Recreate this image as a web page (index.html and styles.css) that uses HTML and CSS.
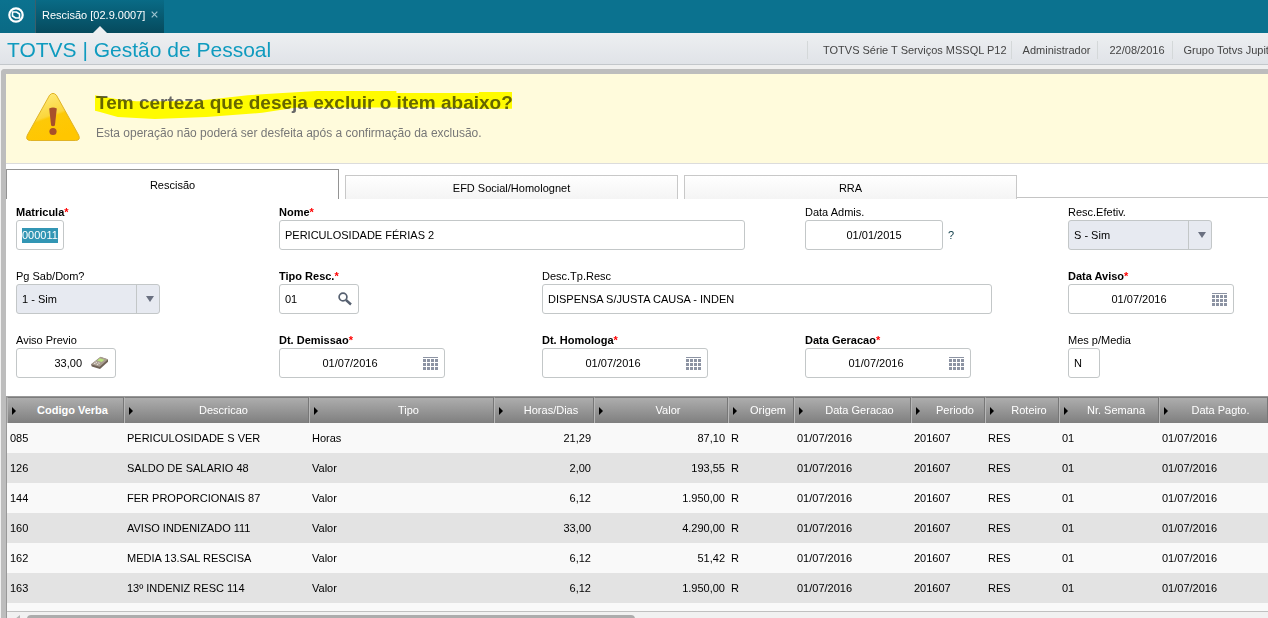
FILE: index.html
```html
<!DOCTYPE html>
<html lang="pt-BR">
<head>
<meta charset="utf-8">
<title>Rescisão [02.9.0007]</title>
<link rel="stylesheet" href="styles.css">
</head>
<body>
<svg class="sprite" aria-hidden="true">
  <symbol id="calendar" viewBox="0 0 15 13">
    <path fill="#8c93a3" d="M0 0h15v1H0zM0 2h3v3H0zM4 2h3v3H4zM8 2h3v3H8zM12 2h3v3h-3zM0 6h3v3H0zM4 6h3v3H4zM8 6h3v3H8zM12 6h3v3h-3zM0 10h3v3H0zM4 10h3v3H4zM8 10h3v3H8zM12 10h3v3h-3z"/>
  </symbol>
  <symbol id="down" viewBox="0 0 8 6"><path fill="#6a7080" d="M0 0h8L4 6z"/></symbol>
</svg>

<nav class="topbar">
  <button class="home" type="button" aria-label="Início">
    <svg width="16" height="16" viewBox="0 0 16 16">
      <circle cx="8" cy="8" r="6.7" fill="none" stroke="#fff" stroke-width="2.2"/>
      <path d="M4.500 5h4l3 2v4h-4l-3-2z" fill="none" stroke="#fff" stroke-width="1.600"/>
      <path d="M6 6.500l4 2.500" stroke="#0b6a85" stroke-width="1.500"/>
    </svg>
  </button>
  <div class="apptab">
    <span>Rescisão [02.9.0007]</span>
    <button class="close" type="button" aria-label="Fechar">
      <svg width="7" height="7" viewBox="0 0 7 7"><path d="M.7.7l5.6 5.6M6.3.7L.7 6.3" stroke="#9cc3cf" stroke-width="1.2"/></svg>
    </button>
  </div>
</nav>

<header class="header">
  <h1>TOTVS | Gestão de Pessoal</h1>
  <ul class="meta">
    <li>TOTVS Série T Serviços MSSQL P12</li>
    <li>Administrador</li>
    <li>22/08/2016</li>
    <li>Grupo Totvs Jupiter</li>
  </ul>
</header>

<main class="frame">
  <section class="banner">
    <svg class="warn" width="54" height="48" viewBox="0 0 54 48">
      <defs><linearGradient id="wg" x1="0" y1="0" x2="0.4" y2="1"><stop offset="0" stop-color="#fff08a"/><stop offset=".55" stop-color="#fbd63c"/><stop offset=".6" stop-color="#fdc907"/><stop offset="1" stop-color="#ffc600"/></linearGradient></defs>
      <path d="M23.6 2.2Q27-1.4 30.4 2.2L52.6 42Q55 47.4 49.5 47.5H4.500Q-1 47.400 1.400 42Z" fill="url(#wg)" stroke="#e0b325"/>
      <path d="M23.200 15.500q3.800-2 7.600 0L28.900 32.500q-1.900 1.500-3.800 0Z" fill="#a8502a"/>
      <circle cx="27" cy="38.500" r="3.600" fill="#a8502a"/>
    </svg>
    <div class="message">
      <h2>Tem certeza que deseja excluir o item abaixo?
        <svg class="marker" width="417" height="28" viewBox="0 0 404 27" preserveAspectRatio="none" aria-hidden="true">
          <path fill="#ff0" d="M0 4L22 8 40 10H95L122 7 148 4 182 2 215 0H292V2H372V1H404V17H376L340 16H195L162 21 108 25 58 27 22 25 4 20 0 19Z"/>
        </svg>
      </h2>
      <p>Esta operação não poderá ser desfeita após a confirmação da exclusão.</p>
    </div>
  </section>

  <div class="tabs" role="tablist">
    <button class="tab active" type="button" role="tab" aria-selected="true">Rescisão</button>
    <button class="tab" type="button" role="tab">EFD Social/Homolognet</button>
    <button class="tab" type="button" role="tab">RRA</button>
    <span class="tabline"></span>
  </div>

  <form class="form">
    <div class="field">
      <label class="req" for="matricula">Matricula</label>
      <div class="box w48"><input id="matricula" value="000011" autofocus></div>
    </div>
    <div class="field span2">
      <label class="req" for="nome">Nome</label>
      <div class="box w466"><input id="nome" value="PERICULOSIDADE FÉRIAS 2"></div>
    </div>
    <div class="field">
      <label for="admis">Data Admis.</label>
      <div class="line"><div class="box w138"><input class="center" id="admis" value="01/01/2015"></div><span class="help">?</span></div>
    </div>
    <div class="field">
      <label for="efetiv">Resc.Efetiv.</label>
      <div class="box w144 drop"><select id="efetiv"><option>S - Sim</option></select><span class="arrow"><svg width="8" height="6"><use href="#down"/></svg></span></div>
    </div>

    <div class="field">
      <label for="sabdom">Pg Sab/Dom?</label>
      <div class="box w144 drop"><select id="sabdom"><option>1 - Sim</option></select><span class="arrow"><svg width="8" height="6"><use href="#down"/></svg></span></div>
    </div>
    <div class="field">
      <label class="req" for="tipo">Tipo Resc.</label>
      <div class="box w80"><input id="tipo" value="01">
        <button class="pick" type="button" aria-label="Pesquisar"><svg width="14" height="14" viewBox="0 0 14 14"><circle cx="5" cy="5" r="3.900" fill="none" stroke="#566070" stroke-width="1.700"/><path d="M8 8l5 4.500" stroke="#566070" stroke-width="2.400"/></svg></button>
      </div>
    </div>
    <div class="field span2">
      <label for="desc">Desc.Tp.Resc</label>
      <div class="box w450"><input id="desc" value="DISPENSA S/JUSTA CAUSA - INDEN"></div>
    </div>
    <div class="field">
      <label class="req" for="aviso">Data Aviso</label>
      <div class="box w166"><input class="date" id="aviso" value="01/07/2016"><button class="pick" type="button" aria-label="Calendário"><svg width="15" height="13"><use href="#calendar"/></svg></button></div>
    </div>

    <div class="field">
      <label for="previo">Aviso Previo</label>
      <div class="box w100"><input class="num" id="previo" value="33,00">
        <button class="pick" type="button" aria-label="Calculadora"><svg width="18" height="14" viewBox="0 0 18 14">
          <path d="M0 8.500L9.500 1 17 3.500v2.200L9 13 .8 10.500z" fill="#6f6256"/>
          <path d="M0 8.300L9.500.8 17 3.300 8.600 10.700z" fill="#a99d90"/>
          <path d="M8.800 2.300l4.700 1.400-2.800 2.300-4.700-1.500z" fill="#b9e27c"/>
          <path d="M4.500 6l1.500.5M3 7.200l1.500.5M7.200 6.900l1.500.4M5.700 8.100l1.500.4" stroke="#eee8e0"/>
        </svg></button>
      </div>
    </div>
    <div class="field">
      <label class="req" for="demissao">Dt. Demissao</label>
      <div class="box w166"><input class="date" id="demissao" value="01/07/2016"><button class="pick" type="button" aria-label="Calendário"><svg width="15" height="13"><use href="#calendar"/></svg></button></div>
    </div>
    <div class="field">
      <label class="req" for="homologa">Dt. Homologa</label>
      <div class="box w166"><input class="date" id="homologa" value="01/07/2016"><button class="pick" type="button" aria-label="Calendário"><svg width="15" height="13"><use href="#calendar"/></svg></button></div>
    </div>
    <div class="field">
      <label class="req" for="geracao">Data Geracao</label>
      <div class="box w166"><input class="date" id="geracao" value="01/07/2016"><button class="pick" type="button" aria-label="Calendário"><svg width="15" height="13"><use href="#calendar"/></svg></button></div>
    </div>
    <div class="field">
      <label for="media">Mes p/Media</label>
      <div class="box w32"><input id="media" value="N"></div>
    </div>
  </form>

  <section class="grid">
    <div class="rows">
      <table>
        <colgroup><col class="c117"><col class="c185"><col class="c185"><col class="c100"><col class="c134"><col class="c66"><col class="c117"><col class="c74"><col class="c74"><col class="c100"><col></colgroup>
        <thead><tr><th class="key">Codigo Verba</th><th>Descricao</th><th>Tipo</th><th>Horas/Dias</th><th>Valor</th><th>Origem</th><th>Data Geracao</th><th>Periodo</th><th>Roteiro</th><th>Nr. Semana</th><th>Data Pagto.</th></tr></thead>
        <tbody>
          <tr><td>085</td><td>PERICULOSIDADE S VER</td><td>Horas</td><td class="r">21,29</td><td class="r">87,10</td><td>R</td><td>01/07/2016</td><td>201607</td><td>RES</td><td>01</td><td>01/07/2016</td></tr>
          <tr><td>126</td><td>SALDO DE SALARIO 48</td><td>Valor</td><td class="r">2,00</td><td class="r">193,55</td><td>R</td><td>01/07/2016</td><td>201607</td><td>RES</td><td>01</td><td>01/07/2016</td></tr>
          <tr><td>144</td><td>FER PROPORCIONAIS 87</td><td>Valor</td><td class="r">6,12</td><td class="r">1.950,00</td><td>R</td><td>01/07/2016</td><td>201607</td><td>RES</td><td>01</td><td>01/07/2016</td></tr>
          <tr><td>160</td><td>AVISO INDENIZADO 111</td><td>Valor</td><td class="r">33,00</td><td class="r">4.290,00</td><td>R</td><td>01/07/2016</td><td>201607</td><td>RES</td><td>01</td><td>01/07/2016</td></tr>
          <tr><td>162</td><td>MEDIA 13.SAL RESCISA</td><td>Valor</td><td class="r">6,12</td><td class="r">51,42</td><td>R</td><td>01/07/2016</td><td>201607</td><td>RES</td><td>01</td><td>01/07/2016</td></tr>
          <tr><td>163</td><td>13º INDENIZ RESC 114</td><td>Valor</td><td class="r">6,12</td><td class="r">1.950,00</td><td>R</td><td>01/07/2016</td><td>201607</td><td>RES</td><td>01</td><td>01/07/2016</td></tr>
        </tbody>
      </table>
    </div>
    <div class="scroll"><svg class="left" width="5" height="8" viewBox="0 0 5 8"><path d="M5 0v8L0 4z" fill="#b4b4b4"/></svg><span class="thumb"></span></div>
  </section>
</main>
<script src="main.js"></script>
</body>
</html>
```

FILE: styles.css
```css
* { box-sizing: border-box; }

body {
  margin: 0;
  height: 100vh;
  display: flex;
  flex-direction: column;
  overflow: hidden;
  background: #f0f0f0;
  color: #000;
  font: 11px/14px "Liberation Sans", Arial, sans-serif;
}

button, input, select { font: inherit; color: inherit; margin: 0; }
button { padding: 0; border: 0; background: none; }
h1, h2, p, ul { margin: 0; padding: 0; }
svg { display: block; flex: none; }
.sprite { position: absolute; width: 0; height: 0; }

/* Top bar */
.topbar { flex: none; display: flex; height: 33px; background: #0b728f; }
.home {
  width: 36px;
  padding: 0 0 3px 8px;
  border-right: 1px solid #3c5f6b;
  background: linear-gradient(#0b728f, #0a6a85);
}
.apptab {
  display: flex;
  position: relative;
  align-items: center;
  gap: 6px;
  padding: 0 6px 3px 6px;
  background: linear-gradient(#096b86, #064a5d);
  color: #fff;
}
.close { padding-bottom: 2px; }
.apptab::after {
  content: "";
  position: absolute;
  bottom: 0;
  left: 50%;
  margin-left: -7px;
  border: 7px solid transparent;
  border-top: 0;
  border-bottom-color: #edeff1;
}

/* Header */
.header {
  flex: none;
  display: flex;
  align-items: center;
  height: 32px;
  padding: 2px 0 0 7px;
  border-bottom: 1px solid #c3c7cb;
  background: linear-gradient(#edeff1, #e0e3e8);
}
.header h1 { flex: 1; color: #0f9bbf; font-size: 21px; line-height: 24px; font-weight: 400; white-space: nowrap; }
.meta { flex: none; display: flex; width: 461px; overflow: hidden; list-style: none; color: #444; white-space: nowrap; }
.meta li { flex: none; padding: 2px 7px 2px 11px; border-left: 1px solid #d4d8d9; }
.meta li:first-child { padding: 2px 4px 2px 15px; }

/* Frame */
.frame {
  flex: 1;
  min-height: 0;
  display: flex;
  flex-direction: column;
  margin: 4px 0 0 1px;
  border: solid #bdbdbd;
  border-width: 5px 0 0 5px;
  border-radius: 4px 0 0 0;
  background: #fff;
}
.banner {
  flex: none;
  display: flex;
  gap: 16px;
  padding: 19px 20px 20px;
  border-bottom: 1px solid #dcdcdc;
  background: #fffbdc;
  color: #666;
}
.message { display: flex; flex-direction: column; gap: 10px; }
.message h2 { position: relative; font-size: 19px; line-height: 20px; }
.marker { position: absolute; left: -1px; top: -2px; mix-blend-mode: multiply; }
.message p { font-size: 12px; line-height: 20px; color: #777; }

/* Tabs */
.tabs { flex: none; display: flex; align-items: flex-end; gap: 6px; padding-top: 5px; }
.tab {
  flex: 1 1 0;
  height: 24px;
  border: 1px solid #c8c8c8;
  border-bottom: 0;
  background: linear-gradient(#fff, #f4f4f4);
}
.tab.active { height: 30px; border-color: #949494; background: #fff; }
.tabline { flex: 0 0 251px; height: 2px; margin-left: -6px; border-top: 1px solid #c4c4c4; }

/* Form */
.form {
  flex: none;
  display: grid;
  grid-template-columns: repeat(4, 1fr) 200px;
  row-gap: 19px;
  padding: 6px 0 18px 10px;
}
.span2 { grid-column: span 2; }
.field { display: flex; flex-direction: column; min-width: 0; }
.field label { line-height: 15px; }
.req { font-weight: 700; }
.req::after { content: "*"; color: #f00; }
.line { display: flex; align-items: center; gap: 5px; }
.help { color: #0c3a46; }
.box {
  display: flex;
  align-items: center;
  height: 30px;
  max-width: 100%;
  padding: 0 5px;
  border: 1px solid #c3c7c8;
  border-radius: 3px;
  background: #fff;
}
.box input { flex: 1; min-width: 0; height: 15px; line-height: 15px; padding: 0; border: 0; outline: 0; background: none; }
.box .center { text-align: center; }
.box .date { text-align: center; padding-right: 8px; }
.box .num { text-align: right; padding-right: 9px; }
.box input::selection { background: #3296b4; color: #fff; }
.pick { margin-right: 1px; }
.w32 { width: 32px; }
.w48 { width: 48px; }
.w80 { width: 80px; }
.w100 { width: 100px; }
.w138 { width: 138px; }
.w144 { width: 144px; }
.w166 { width: 166px; }
.w450 { width: 450px; }
.w466 { width: 466px; }

.drop { padding-right: 0; background: #e7eaf1; }
.drop select { flex: 1; height: 28px; padding: 0; border: 0; outline: 0; appearance: none; background: none; }
.arrow {
  display: flex;
  align-items: center;
  justify-content: center;
  width: 23px;
  height: 28px;
  padding-left: 3px;
  border-left: 1px solid #c3c7c8;
  pointer-events: none;
}

/* Grid */
.grid {
  flex: 1;
  min-height: 0;
  display: flex;
  flex-direction: column;
  border: solid #999;
  border-width: 1px 0 0 1px;
  background: #f9f9f9;
}
.rows { flex: 1; min-height: 0; overflow: hidden; }
table { width: 100%; border-collapse: separate; border-spacing: 0; table-layout: fixed; }
.c66 { width: 66px; }
.c74 { width: 74px; }
.c100 { width: 100px; }
.c117 { width: 117px; }
.c134 { width: 134px; }
.c185 { width: 185px; }
th {
  position: relative;
  height: 26px;
  padding: 0 0 2px 14px;
  border-top: 1px solid #7c7c7c;
  border-left: 1px solid #b8b8b8;
  border-right: 1px solid #777;
  background: linear-gradient(#adadad, #7f7f7f);
  color: #fff;
  font-weight: 400;
  white-space: nowrap;
}
th.key { font-weight: 700; }
th::before {
  content: "";
  position: absolute;
  left: 4px;
  top: 9px;
  border: 4px solid transparent;
  border-left-color: #000;
  border-right: 0;
}
td { height: 30px; padding: 0 3px; white-space: nowrap; }
td.r { text-align: right; }
tbody tr:nth-child(even) { background: #e3e3e3; }

.scroll {
  flex: none;
  display: flex;
  gap: 7px;
  height: 7px;
  padding: 3px 0 0 8px;
  overflow: hidden;
  border-top: 1px solid #c0c0c0;
  background: #f1f1f1;
}
.thumb { width: 608px; height: 14px; border-radius: 4px; background: #acacac; }
```

FILE: main.js
```js
document.getElementById("matricula").focus();
document.getElementById("matricula").select();
```
